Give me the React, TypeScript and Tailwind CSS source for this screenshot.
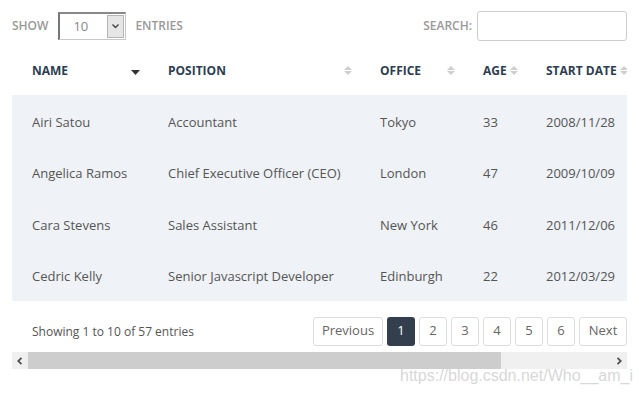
import React from "react";

const rows = [
  ["Airi Satou", "Accountant", "Tokyo", "33", "2008/11/28"],
  ["Angelica Ramos", "Chief Executive Officer (CEO)", "London", "47", "2009/10/09"],
  ["Cara Stevens", "Sales Assistant", "New York", "46", "2011/12/06"],
  ["Cedric Kelly", "Senior Javascript Developer", "Edinburgh", "22", "2012/03/29"],
];

const widths = ["w-[144px]", "w-[212px]", "w-[103px]", "w-[63px]", "w-[110px]"];

function SortBoth() {
  return (
    <svg width="8" height="9" viewBox="0 0 8 9" className="shrink-0">
      <path d="M0 4 L4 0 L8 4 Z" fill="#cfcfcf" />
      <path d="M0 5 L8 5 L4 9 Z" fill="#cfcfcf" />
    </svg>
  );
}

function SortDesc() {
  return (
    <svg width="9" height="5" viewBox="0 0 9 5" className="shrink-0 mt-[3px]">
      <path d="M0 0 L9 0 L4.5 5 Z" fill="#333" />
    </svg>
  );
}

export default function App() {
  const headers = ["NAME", "POSITION", "OFFICE", "AGE", "START DATE"];
  return (
    <div className="relative w-[639px] h-[393px] bg-white overflow-hidden" style={{ fontFamily: "'Open Sans', sans-serif" }}>
      <div className="pl-[12px] pr-[12px]">
        {/* top controls */}
        <div className="flex items-center justify-between h-[30px] mt-[11px]">
          <div className="flex items-center text-[12px] font-semibold text-[#999]">
            <span>SHOW</span>
            <div className="ml-[10px] flex h-[28px] w-[68px] border border-[#c8c8c8] border-l-[#777] border-t-[#888] border-l-2 border-t-2 bg-white">
              <div className="flex-1 flex items-center pl-[13px] text-[13px] font-normal text-[#888]">10</div>
              <div className="w-[17px] m-[1px] bg-[#e6e6e6] border border-[#b5b5b5] flex items-center justify-center">
                <svg width="7" height="5" viewBox="0 0 7 5"><path d="M0.5 0.5 L3.5 3.5 L6.5 0.5" stroke="#444" strokeWidth="1.4" fill="none" /></svg>
              </div>
            </div>
            <span className="ml-[9px]">ENTRIES</span>
          </div>
          <div className="flex items-center text-[12px] font-semibold text-[#999]">
            <span>SEARCH:</span>
            <div className="ml-[5px] w-[150px] h-[30px] border border-[#ccc] rounded-[3px] bg-white" />
          </div>
        </div>

        {/* table */}
        <div className="w-[615px] overflow-hidden mt-[11px]">
          <div className="w-[632px]">
            <div className="flex h-[43px] items-center pb-[6px] text-[12px] font-bold text-[#2c3e50]">
              {headers.map((h, i) => (
                <div key={h} className={`${widths[i]} shrink-0 flex items-center justify-between ${i === 0 ? "pl-[20px]" : "pl-[12px]"} pr-[16px]`}>
                  <span>{h}</span>
                  {i === 0 ? <SortDesc /> : <SortBoth />}
                </div>
              ))}
            </div>
            <div className="bg-[#eff2f7]">
              {rows.map((r, ri) => (
                <div key={ri} className="flex h-[51.5px] items-center pt-[3px] text-[13px] text-[#555]">
                  {r.map((c, ci) => (
                    <div key={ci} className={`${widths[ci]} shrink-0 ${ci === 0 ? "pl-[20px]" : "pl-[12px]"} whitespace-nowrap`}>
                      {c}
                    </div>
                  ))}
                </div>
              ))}
            </div>
          </div>
        </div>

        {/* footer */}
        <div className="flex items-center justify-between w-[615px] h-[30px] mt-[15px]">
          <div className="pl-[20px] pt-[2px] text-[12px] text-[#555]">Showing 1 to 10 of 57 entries</div>
          <div className="flex items-center gap-[4px] text-[13px] text-[#666]">
            <div className="h-[29px] w-[70px] border border-[#ddd] rounded-[3px] flex items-center justify-center">Previous</div>
            <div className="h-[29px] w-[28px] rounded-[3px] bg-[#343f4e] text-white flex items-center justify-center">1</div>
            {["2", "3", "4", "5", "6"].map((p) => (
              <div key={p} className="h-[29px] w-[28px] border border-[#ddd] rounded-[3px] flex items-center justify-center">{p}</div>
            ))}
            <div className="h-[29px] w-[48px] border border-[#ddd] rounded-[3px] flex items-center justify-center">Next</div>
          </div>
        </div>

        {/* scrollbar */}
        <div className="mt-[6px] w-[615px] h-[17px] bg-[#f0f0f0] flex items-stretch">
          <div className="w-[16px] flex items-center justify-center">
            <svg width="6" height="8" viewBox="0 0 6 8"><path d="M4.5 0.8 L1.2 4 L4.5 7.2" stroke="#505050" strokeWidth="1.8" fill="none" /></svg>
          </div>
          <div className="w-[473px] bg-[#cdcdcd]" />
          <div className="flex-1" />
          <div className="w-[16px] flex items-center justify-center">
            <svg width="6" height="8" viewBox="0 0 6 8"><path d="M1.5 0.8 L4.8 4 L1.5 7.2" stroke="#505050" strokeWidth="1.8" fill="none" /></svg>
          </div>
        </div>
      </div>

      <div className="absolute left-[400px] top-[364px] text-[16px] text-[#d8d8d8] whitespace-nowrap" style={{ fontFamily: "'Liberation Sans', Arial, sans-serif" }}>
        https://blog.csdn.net/Who__am_i
      </div>
    </div>
  );
}
